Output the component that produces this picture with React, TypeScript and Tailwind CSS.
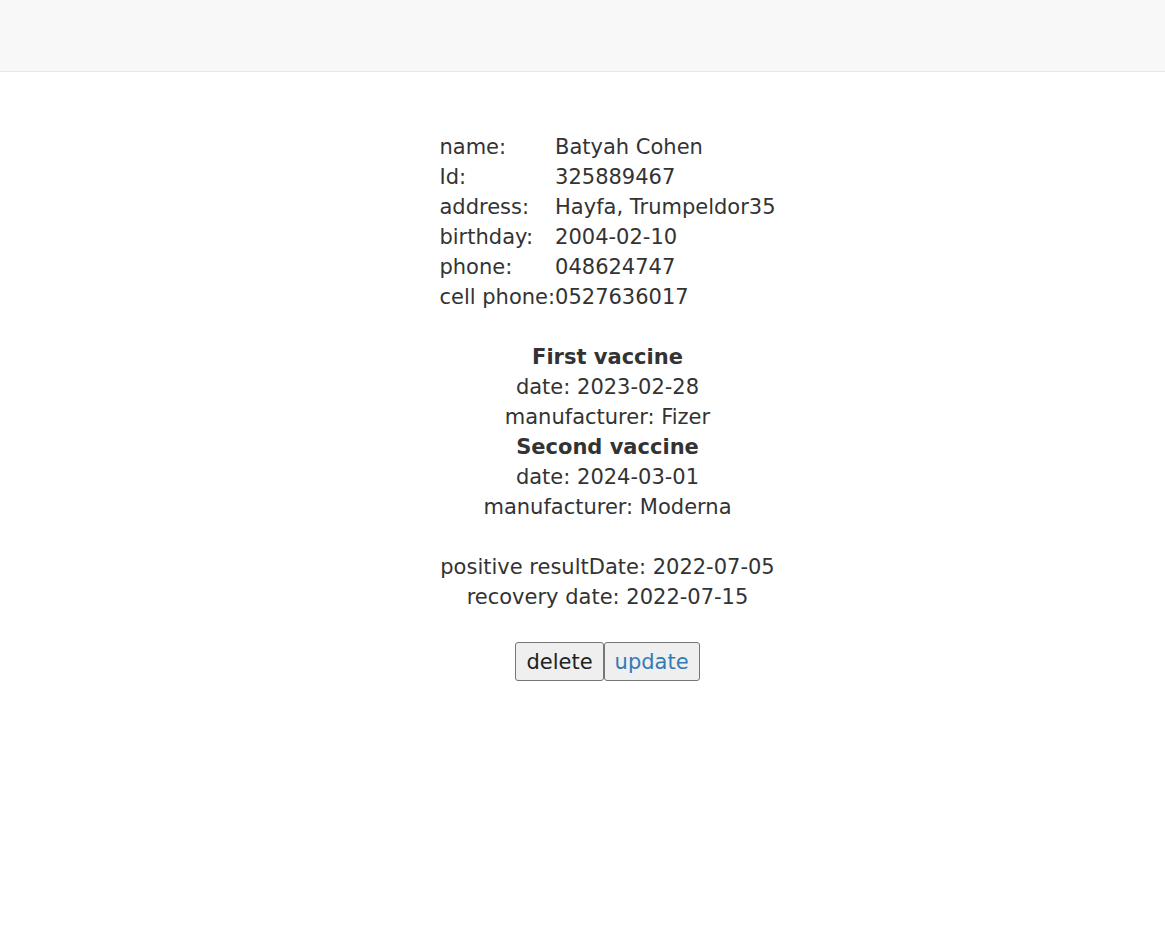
const details = [
  ["name:", "Batyah Cohen"],
  ["Id:", "325889467"],
  ["address:", "Hayfa, Trumpeldor35"],
  ["birthday:", "2004-02-10"],
  ["phone:", "048624747"],
  ["cell phone:", "0527636017"],
];

const vaccines = [
  { title: "First vaccine", date: "2023-02-28", manufacturer: "Fizer" },
  { title: "Second vaccine", date: "2024-03-01", manufacturer: "Moderna" },
];

export default function App() {
  return (
    <div className="min-h-[935px] bg-white text-[#333] font-['DejaVu_Sans',sans-serif] text-[21px] leading-[30px]">
      <nav className="h-[72px] bg-[#f8f8f8] border-b border-[#e7e7e7]" />

      <div className="pl-[50px] pt-[60px] flex flex-col items-center text-center">
        <table className="text-left">
          <tbody>
            {details.map(([label, value]) => (
              <tr key={label}>
                <td className="p-0 whitespace-nowrap">{label}</td>
                <td className="p-0 whitespace-nowrap">{value}</td>
              </tr>
            ))}
          </tbody>
        </table>

        <div className="mt-[30px]">
          {vaccines.map((v) => (
            <div key={v.title}>
              <div className="font-bold">{v.title}</div>
              <div>date: {v.date}</div>
              <div>manufacturer: {v.manufacturer}</div>
            </div>
          ))}
        </div>

        <div className="mt-[30px]">
          <div>positive resultDate: 2022-07-05</div>
          <div>recovery date: 2022-07-15</div>
        </div>

        <div className="mt-[30px] flex">
          <button className="h-[39px] px-[10px] bg-[#efefef] border border-[#767676] rounded-[3px] text-[#222]">
            delete
          </button>
          <button className="h-[39px] px-[10px] bg-[#efefef] border border-[#767676] rounded-[3px] text-[#337ab7]">
            update
          </button>
        </div>
      </div>
    </div>
  );
}
